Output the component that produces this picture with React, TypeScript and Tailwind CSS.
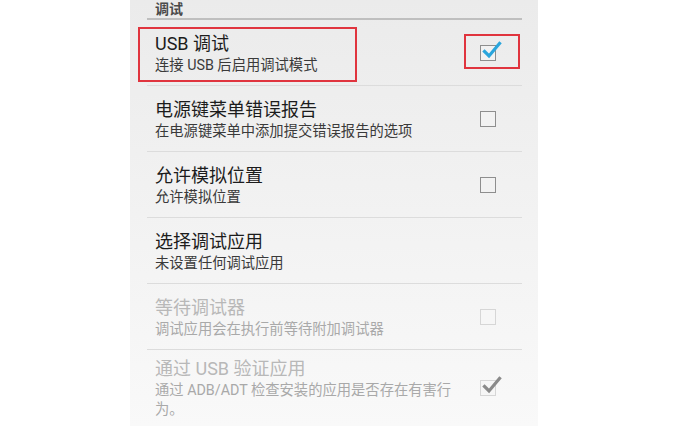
import React from "react";

type Pref = {
  title: string;
  summary: string;
  checkbox?: "on" | "off";
  disabled?: boolean;
  highlight?: boolean;
  pad?: string;
};

const PREFS: Pref[] = [
  { title: "USB 调试", summary: "连接 USB 后启用调试模式", checkbox: "on", highlight: true },
  { title: "电源键菜单错误报告", summary: "在电源键菜单中添加提交错误报告的选项", checkbox: "off" },
  { title: "允许模拟位置", summary: "允许模拟位置", checkbox: "off" },
  { title: "选择调试应用", summary: "未设置任何调试应用" },
  { title: "等待调试器", summary: "调试应用会在执行前等待附加调试器", checkbox: "off", disabled: true },
  {
    title: "通过 USB 验证应用",
    summary: "通过 ADB/ADT 检查安装的应用是否存在有害行为。",
    checkbox: "on",
    disabled: true,
    pad: "pt-[6px] pb-[8px]",
  },
];

function CheckBox({ checked, disabled }: { checked: boolean; disabled?: boolean }) {
  return (
    <div
      className={
        disabled
          ? "relative w-[16px] h-[16px] border-[1.5px] border-[#d6d6d6] bg-[#f6f6f6]"
          : "relative w-[16px] h-[16px] border-[1.5px] border-[#8e8e8e] bg-[#f2f2f2]"
      }
    >
      {checked && (
        <svg
          width="20"
          height="19"
          viewBox="0 0 20 19"
          className="absolute left-[1px] top-[-5px]"
        >
          <path
            d="M2.5 10.5 L7 15 L17.5 2.5"
            fill="none"
            stroke={disabled ? "#8a8a8a" : "#2aa5dc"}
            strokeWidth="3.2"
            strokeLinecap="square"
          />
        </svg>
      )}
    </div>
  );
}

function PrefRow({ p }: { p: Pref }) {
  return (
    <div
      className={`relative flex items-center border-b border-[#dcdcdc] pl-[8px] pr-[26px] ${
        p.pad ?? "pt-[11px] pb-[10px]"
      }`}
    >
      <div className="w-[300px]">
        <div
          className={`text-[18px] leading-[25px] ${p.disabled ? "text-[#b8b8b8]" : "text-[#1c1c1c]"}`}
        >
          {p.title}
        </div>
        <div
          className={`text-[14.3px] leading-[19px] ${p.disabled ? "text-[#a9a9a9]" : "text-[#3a3a3a]"}`}
        >
          {p.summary}
        </div>
      </div>
      {p.checkbox && (
        <div className="ml-auto">
          <CheckBox checked={p.checkbox === "on"} disabled={p.disabled} />
        </div>
      )}
      {p.highlight && (
        <>
          {/* red annotation boxes drawn over the screenshot */}
          <div className="absolute left-[-9px] top-[7px] w-[219px] h-[55px] border-2 border-[#e0343e]" />
          <div className="absolute left-[317px] top-[14px] w-[56px] h-[35px] border-2 border-[#e0343e]" />
        </>
      )}
    </div>
  );
}

export default function App() {
  return (
    <div
      className="h-[426px] w-[686px] overflow-hidden bg-white"
      style={{ fontFamily: '"Roboto", "Noto Sans CJK SC", sans-serif' }}
    >
      <div className="ml-[130px] w-[408px] h-full bg-gradient-to-b from-[#ebebeb] to-[#f9f9f9] pl-[17px] pr-[16px]">
        <div className="h-[20px] border-b-2 border-[#bfbfbf] pl-[8px] text-[14px] leading-[18px] font-bold text-[#4a4a4a]">
          调试
        </div>
        {PREFS.map((p) => (
          <PrefRow key={p.title} p={p} />
        ))}
      </div>
    </div>
  );
}
